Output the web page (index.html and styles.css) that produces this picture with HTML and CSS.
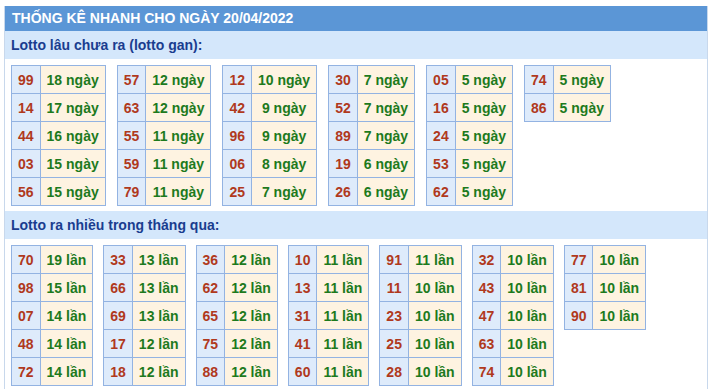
FILE: index.html
```html
<!DOCTYPE html>
<html lang="vi">
<head>
<meta charset="utf-8">
<link rel="stylesheet" href="styles.css">
</head>
<body>
<div class="top-gap"></div>
<div class="box">
  <div class="head">THỐNG KÊ NHANH CHO NGÀY 20/04/2022</div>
  <div class="sub">Lotto lâu chưa ra (lotto gan):</div>
  <div class="tables">
    <table><tr><td class="n">99</td><td class="v">18 ngày</td></tr><tr><td class="n">14</td><td class="v">17 ngày</td></tr><tr><td class="n">44</td><td class="v">16 ngày</td></tr><tr><td class="n">03</td><td class="v">15 ngày</td></tr><tr><td class="n">56</td><td class="v">15 ngày</td></tr></table>
    <table><tr><td class="n">57</td><td class="v">12 ngày</td></tr><tr><td class="n">63</td><td class="v">12 ngày</td></tr><tr><td class="n">55</td><td class="v">11 ngày</td></tr><tr><td class="n">59</td><td class="v">11 ngày</td></tr><tr><td class="n">79</td><td class="v">11 ngày</td></tr></table>
    <table><tr><td class="n">12</td><td class="v">10 ngày</td></tr><tr><td class="n">42</td><td class="v">9 ngày</td></tr><tr><td class="n">96</td><td class="v">9 ngày</td></tr><tr><td class="n">06</td><td class="v">8 ngày</td></tr><tr><td class="n">25</td><td class="v">7 ngày</td></tr></table>
    <table><tr><td class="n">30</td><td class="v">7 ngày</td></tr><tr><td class="n">52</td><td class="v">7 ngày</td></tr><tr><td class="n">89</td><td class="v">7 ngày</td></tr><tr><td class="n">19</td><td class="v">6 ngày</td></tr><tr><td class="n">26</td><td class="v">6 ngày</td></tr></table>
    <table><tr><td class="n">05</td><td class="v">5 ngày</td></tr><tr><td class="n">16</td><td class="v">5 ngày</td></tr><tr><td class="n">24</td><td class="v">5 ngày</td></tr><tr><td class="n">53</td><td class="v">5 ngày</td></tr><tr><td class="n">62</td><td class="v">5 ngày</td></tr></table>
    <table><tr><td class="n">74</td><td class="v">5 ngày</td></tr><tr><td class="n">86</td><td class="v">5 ngày</td></tr></table>
  </div>
  <div class="sub">Lotto ra nhiều trong tháng qua:</div>
  <div class="tables tables-2">
    <table><tr><td class="n">70</td><td class="v">19 lần</td></tr><tr><td class="n">98</td><td class="v">15 lần</td></tr><tr><td class="n">07</td><td class="v">14 lần</td></tr><tr><td class="n">48</td><td class="v">14 lần</td></tr><tr><td class="n">72</td><td class="v">14 lần</td></tr></table>
    <table><tr><td class="n">33</td><td class="v">13 lần</td></tr><tr><td class="n">66</td><td class="v">13 lần</td></tr><tr><td class="n">69</td><td class="v">13 lần</td></tr><tr><td class="n">17</td><td class="v">12 lần</td></tr><tr><td class="n">18</td><td class="v">12 lần</td></tr></table>
    <table><tr><td class="n">36</td><td class="v">12 lần</td></tr><tr><td class="n">62</td><td class="v">12 lần</td></tr><tr><td class="n">65</td><td class="v">12 lần</td></tr><tr><td class="n">75</td><td class="v">12 lần</td></tr><tr><td class="n">88</td><td class="v">12 lần</td></tr></table>
    <table><tr><td class="n">10</td><td class="v">11 lần</td></tr><tr><td class="n">13</td><td class="v">11 lần</td></tr><tr><td class="n">31</td><td class="v">11 lần</td></tr><tr><td class="n">41</td><td class="v">11 lần</td></tr><tr><td class="n">60</td><td class="v">11 lần</td></tr></table>
    <table><tr><td class="n">91</td><td class="v">11 lần</td></tr><tr><td class="n">11</td><td class="v">10 lần</td></tr><tr><td class="n">23</td><td class="v">10 lần</td></tr><tr><td class="n">25</td><td class="v">10 lần</td></tr><tr><td class="n">28</td><td class="v">10 lần</td></tr></table>
    <table><tr><td class="n">32</td><td class="v">10 lần</td></tr><tr><td class="n">43</td><td class="v">10 lần</td></tr><tr><td class="n">47</td><td class="v">10 lần</td></tr><tr><td class="n">63</td><td class="v">10 lần</td></tr><tr><td class="n">74</td><td class="v">10 lần</td></tr></table>
    <table><tr><td class="n">77</td><td class="v">10 lần</td></tr><tr><td class="n">81</td><td class="v">10 lần</td></tr><tr><td class="n">90</td><td class="v">10 lần</td></tr></table>
  </div>
</div>
</body>
</html>
```
FILE: styles.css
```css
html, body {
  margin: 0;
  padding: 0;
  background: #ffffff;
  font-family: "Liberation Sans", Arial, sans-serif;
}
.top-gap {
  height: 6px;
}
.box {
  margin-left: 4px;
  width: 702px;
  border-left: 1px solid #c8d8ec;
  border-right: 1px solid #c8d8ec;
}
.head {
  background: #5b96d6;
  color: #ffffff;
  font-weight: bold;
  font-size: 14px;
  height: 25px;
  line-height: 25px;
  padding-left: 7px;
}
.sub {
  background: #d4e7fb;
  color: #1a3d8f;
  font-weight: bold;
  font-size: 14px;
  height: 28px;
  line-height: 28px;
  padding-left: 6px;
}
.tables {
  display: flex;
  align-items: flex-start;
  gap: 11px;
  padding: 6px 0 5px 6px;
}
.tables-2 {
  gap: 10px;
}
table {
  border-collapse: collapse;
  font-size: 14px;
  font-weight: bold;
}
td {
  border: 1px solid #93b3e2;
  height: 27px;
  padding: 0 6px;
  text-align: center;
  white-space: nowrap;
}
td.n {
  background: #deebfb;
  color: #b0391d;
}
td.v {
  background: #fef3e1;
  color: #1d7a1d;
}
```
